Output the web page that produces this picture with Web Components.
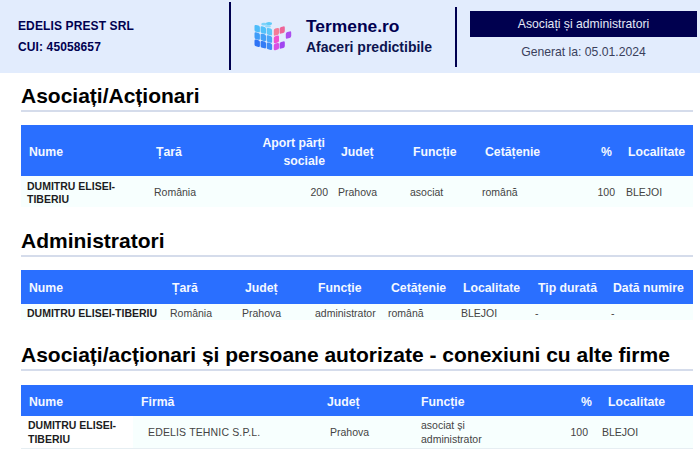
<!DOCTYPE html>
<html lang="ro">
<head>
<meta charset="utf-8">
<title>Asociați și administratori</title>
<style>
  html, body { margin: 0; background: #fff; font-family: "Liberation Sans", Arial, sans-serif; }
  body { width: 700px; height: 454px; overflow: hidden; }
</style>
</head>
<body>
<report-header></report-header>
<report-section heading="Asociați/Acționari" top="10" gap="13">
  <data-table name="asociati"></data-table>
</report-section>
<report-section heading="Administratori" top="21" gap="13">
  <data-table name="administratori"></data-table>
</report-section>
<report-section heading="Asociați/acționari și persoane autorizate - conexiuni cu alte firme" top="22" gap="14">
  <data-table name="conexiuni"></data-table>
</report-section>

<script>
const TABLES = {
  asociati: {
    headH: 51, rowH: 31, lh: 13.4, headTop: 2, cellTop: 3,
    cols: [
      { t: "Nume", w: 127, pad: 6, bold: true },
      { t: "Țară", w: 85, pad: 6 },
      { t: "Aport părți sociale", w: 100, pad: 5, right: true },
      { t: "Județ", w: 72, pad: 5 },
      { t: "Funcție", w: 72, pad: 5 },
      { t: "Cetățenie", w: 72, pad: 5 },
      { t: "%", w: 71, pad: 5, right: true },
      { t: "Localitate", w: 73, pad: 6 }
    ],
    row: ["DUMITRU ELISEI-TIBERIU", "România", "200", "Prahova", "asociat", "română", "100", "BLEJOI"]
  },
  administratori: {
    headH: 34, rowH: 16, lh: 14, headTop: 1, cellTop: 2,
    cols: [
      { t: "Nume", w: 143, pad: 6, bold: true },
      { t: "Țară", w: 73, pad: 6 },
      { t: "Județ", w: 73, pad: 5 },
      { t: "Funcție", w: 73, pad: 5 },
      { t: "Cetățenie", w: 72, pad: 5 },
      { t: "Localitate", w: 75, pad: 6 },
      { t: "Tip durată", w: 75, pad: 5 },
      { t: "Dată numire", w: 88, pad: 6 }
    ],
    row: ["DUMITRU ELISEI-TIBERIU", "România", "Prahova", "administrator", "română", "BLEJOI", "-", "-"]
  },
  conexiuni: {
    headH: 31, rowH: 33, lh: 14.4, headTop: 2, cellTop: 0, line: true, whiteFirst: true,
    cols: [
      { t: "Nume", w: 112, pad: 7, bold: true },
      { t: "Firmă", w: 186, pad: 15, ls: .15 },
      { t: "Județ", w: 94, pad: 11 },
      { t: "Funcție", w: 129, pad: 8, wrapAt: 90 },
      { t: "%", w: 58, pad: 12, right: true },
      { t: "Localitate", w: 93, pad: 2 }
    ],
    row: ["DUMITRU ELISEI-TIBERIU", "EDELIS TEHNIC S.P.L.", "Prahova", "asociat și administrator", "100", "BLEJOI"]
  }
};

class ReportHeader extends HTMLElement {
  constructor() {
    super();
    this.attachShadow({ mode: "open" });
    this.shadowRoot.innerHTML = `
      <style>
        :host { display: flex; align-items: center; height: 73px; background: #e2ecfd; color: #000050; box-sizing: border-box; }
        .firma { width: 229px; padding-left: 18px; box-sizing: border-box; font-size: 12px; font-weight: 700; letter-spacing: .12px; display: flex; flex-direction: column; gap: 7px; line-height: 14px; }
        .sep { width: 2px; background: #000050; flex: none; }
        .s1 { height: 68px; margin-top: -1px; }
        .s2 { height: 60px; }
        .brand { width: 224px; display: flex; align-items: center; box-sizing: border-box; padding-left: 23px; gap: 14px; }
        .brand svg { flex: none; filter: blur(.2px); margin-top: -1px; }
        .nume { font-size: 17.4px; font-weight: 700; line-height: 22px; margin-top: -1px; }
        .moto { font-size: 14px; font-weight: 700; line-height: 20px; color: #0c1450; }
        .act { margin-left: 13px; width: 227px; display: flex; flex-direction: column; align-items: stretch; margin-top: -2px; }
        .titlu { height: 26px; background: #00004f; color: #e4e8f6; font-size: 12.2px; line-height: 26px; text-align: center; }
        .data { font-size: 12.2px; color: #3a3f5c; text-align: center; line-height: 15px; margin-top: 8px; }
      </style>
      <div class="firma"><div>EDELIS PREST SRL</div><div>CUI: 45058657</div></div>
      <div class="sep s1"></div>
      <div class="brand">
        <svg width="38" height="29" viewBox="0 0 38 29">
          <g fill="#5fcbf8">
            <ellipse cx="10" cy="2.2" rx="2.8" ry="1.4" opacity=".75"/>
            <ellipse cx="15" cy="1.6" rx="3" ry="1.5"/>
            <ellipse cx="14" cy="4.2" rx="3" ry="1.3" opacity=".6"/>
          </g>
          <g>
            <rect width="5.4" height="6.8" rx="1.5" fill="#4dbcfb" transform="translate(.5 2.6) skewY(14)"/>
            <rect width="5.4" height="6.8" rx="1.5" fill="#52c0fa" transform="translate(6.6 4) skewY(14)"/>
            <rect width="5.4" height="6.8" rx="1.5" fill="#5cc6f9" transform="translate(12.7 5.6) skewY(14)"/>
            <rect width="5.4" height="6.8" rx="1.5" fill="#3f9cf8" transform="translate(.5 10) skewY(14)"/>
            <rect width="5.4" height="6.8" rx="1.5" fill="#44a0f8" transform="translate(6.6 11.4) skewY(14)"/>
            <rect width="5.4" height="6.8" rx="1.5" fill="#4aa6f8" transform="translate(12.7 13) skewY(14)"/>
            <rect width="5.4" height="6.8" rx="1.5" fill="#2f74f5" transform="translate(.5 17.2) skewY(14)"/>
            <rect width="5.4" height="6.8" rx="1.5" fill="#337cf5" transform="translate(6.6 18.6) skewY(14)"/>
            <rect width="5.4" height="6.8" rx="1.5" fill="#3c8cf6" transform="translate(12.7 20.2) skewY(14)"/>
          </g>
          <rect width="5.2" height="7" rx="1.5" fill="#f47c96" transform="translate(19.8 7) skewY(-15)"/>
          <rect width="5.2" height="6.6" rx="1.5" fill="#ee6498" transform="translate(25.6 5.4) skewY(-15)"/>
          <rect width="5.4" height="6.6" rx="1.6" fill="#ac4ef0" transform="translate(31.8 10.4) skewY(-15)"/>
          <rect width="5.2" height="7" rx="1.5" fill="#f050d0" transform="translate(19.8 14.6) skewY(-15)"/>
          <rect width="5.2" height="6.6" rx="1.5" fill="#d850e4" transform="translate(19.8 22) skewY(-15)"/>
          <rect width="5.2" height="6.6" rx="1.5" fill="#a044f0" transform="translate(25.6 20.4) skewY(-15)"/>
        </svg>
        <div><div class="nume">Termene.ro</div><div class="moto">Afaceri predictibile</div></div>
      </div>
      <div class="sep s2"></div>
      <div class="act"><div class="titlu">Asociați și administratori</div><div class="data">Generat la: 05.01.2024</div></div>
    `;
  }
}
customElements.define("report-header", ReportHeader);

class ReportSection extends HTMLElement {
  constructor() {
    super();
    this.attachShadow({ mode: "open" });
    this.shadowRoot.innerHTML = `
      <style>
        :host { display: block; margin: 0 7px 0 21px; }
        h2 { margin: 0; font-size: 21px; line-height: 26px; font-weight: 700; color: #000; padding-bottom: 1px; border-bottom: 2px solid #d5dceb; white-space: nowrap; }
      </style>
      <h2></h2>
      <slot></slot>
    `;
  }
  connectedCallback() {
    const h = this.shadowRoot.querySelector("h2");
    h.textContent = this.getAttribute("heading");
    h.style.marginTop = this.getAttribute("top") + "px";
    h.style.marginBottom = this.getAttribute("gap") + "px";
  }
}
customElements.define("report-section", ReportSection);

class DataTable extends HTMLElement {
  constructor() {
    super();
    this.attachShadow({ mode: "open" });
  }
  connectedCallback() {
    const d = TABLES[this.getAttribute("name")];
    const head = d.cols.map(c => `<div class="th ${c.right ? "r" : ""}"><span>${c.t}</span></div>`).join("");
    const cells = d.row.map((v, i) => {
      const c = d.cols[i];
      const side = c.right ? "right" : "left";
      const cls = (c.bold ? "b " : "") + (c.right ? "r " : "") + (i == 0 && d.whiteFirst ? "w" : "");
      const inner = c.wrapAt ? `<span style="width:${c.wrapAt}px">${v}</span>` : `<span>${v}</span>`;
      const ls = c.ls ? `letter-spacing:${c.ls}px;` : "";
      return `<div class="td ${cls}" style="padding-${side}:${c.pad}px;${ls}">${inner}</div>`;
    }).join("");
    this.shadowRoot.innerHTML = `
      <style>
        :host { display: block; }
        .grid { display: grid; width: 672px; grid-template-columns: ${d.cols.map(c => c.w + "px").join(" ")}; grid-template-rows: ${d.headH}px ${d.rowH}px; }
        .th, .td { display: flex; align-items: center; box-sizing: border-box; min-width: 0; }
        .th { background: #2a6fff; color: #f4f8ff; padding: ${d.headTop}px 8px 0; font-size: 12.25px; line-height: 18px; font-weight: 700; }
        .td { background: #f7fffe; color: #444; padding-top: ${d.cellTop}px; font-size: 10.5px; line-height: ${d.lh}px; ${d.line ? "border-bottom: 1px solid #e6eef2;" : ""} }
        .r { justify-content: flex-end; text-align: right; }
        .b { font-weight: 700; color: #1c1c22; }
        .w { background: #fff; }
      </style>
      <div class="grid">${head}${cells}</div>
    `;
  }
}
customElements.define("data-table", DataTable);
</script>
</body>
</html>
